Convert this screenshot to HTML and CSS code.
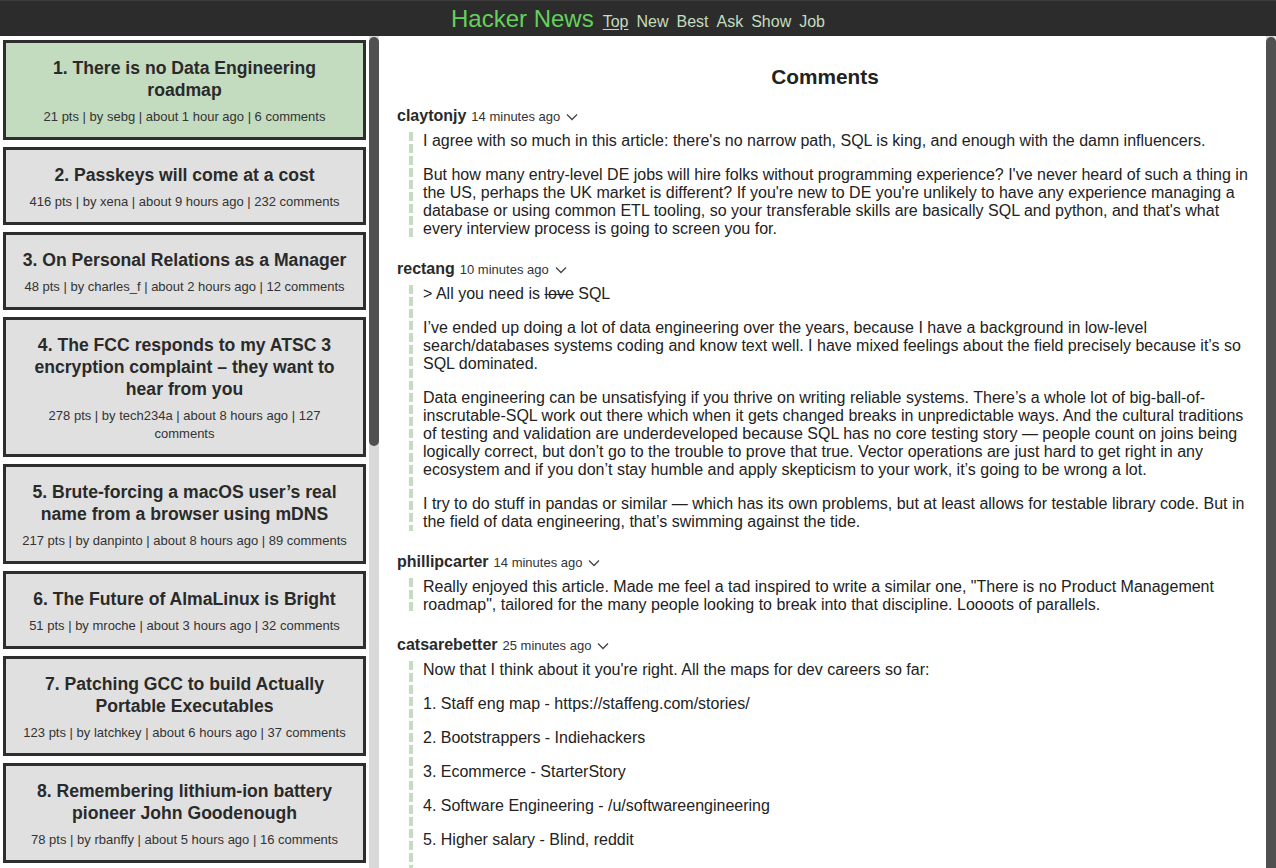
FILE: index.html
```html
<!DOCTYPE html>
<html lang="en">
<head>
<meta charset="utf-8">
<title>Hacker News</title>
<link rel="stylesheet" href="styles.css">
</head>
<body>
<header class="topbar">
  <span class="brand">Hacker News</span>
  <nav class="nav">
    <a class="nav-link active" href="#">Top</a>
    <a class="nav-link" href="#">New</a>
    <a class="nav-link" href="#">Best</a>
    <a class="nav-link" href="#">Ask</a>
    <a class="nav-link" href="#">Show</a>
    <a class="nav-link" href="#">Job</a>
  </nav>
</header>
<div class="layout">
  <div class="pane pane-left">
    <aside class="stories">
      <article class="story selected">
        <h2 class="story-title">1. There is no Data Engineering roadmap</h2>
        <p class="story-meta">21 pts | by sebg | about 1 hour ago | 6 comments</p>
      </article>
      <article class="story">
        <h2 class="story-title">2. Passkeys will come at a cost</h2>
        <p class="story-meta">416 pts | by xena | about 9 hours ago | 232 comments</p>
      </article>
      <article class="story">
        <h2 class="story-title">3. On Personal Relations as a Manager</h2>
        <p class="story-meta">48 pts | by charles_f | about 2 hours ago | 12 comments</p>
      </article>
      <article class="story">
        <h2 class="story-title">4. The FCC responds to my ATSC 3 encryption complaint – they want to hear from you</h2>
        <p class="story-meta">278 pts | by tech234a | about 8 hours ago | 127<br>comments</p>
      </article>
      <article class="story">
        <h2 class="story-title">5. Brute-forcing a macOS user’s real name from a browser using mDNS</h2>
        <p class="story-meta">217 pts | by danpinto | about 8 hours ago | 89 comments</p>
      </article>
      <article class="story">
        <h2 class="story-title">6. The Future of AlmaLinux is Bright</h2>
        <p class="story-meta">51 pts | by mroche | about 3 hours ago | 32 comments</p>
      </article>
      <article class="story">
        <h2 class="story-title">7. Patching GCC to build Actually Portable Executables</h2>
        <p class="story-meta">123 pts | by latchkey | about 6 hours ago | 37 comments</p>
      </article>
      <article class="story">
        <h2 class="story-title">8. Remembering lithium-ion battery pioneer John Goodenough</h2>
        <p class="story-meta">78 pts | by rbanffy | about 5 hours ago | 16 comments</p>
      </article>
    </aside>
    <div class="scrollbar scrollbar-left">
      <div class="scrollbar-thumb thumb-left"></div>
    </div>
  </div>
  <div class="pane pane-right">
    <main class="thread">
      <h1 class="thread-title">Comments</h1>

      <div class="comment">
        <div class="comment-head">
          <span class="comment-author">claytonjy</span>
          <span class="comment-time">14 minutes ago</span>
          <svg class="chevron" width="12" height="8" viewBox="0 0 12 8"><path d="M1 1.5 L6 6.5 L11 1.5" /></svg>
        </div>
        <div class="comment-body">
          <p>I agree with so much in this article: there's no narrow path, SQL is king, and enough with the damn influencers.</p>
          <p>But how many entry-level DE jobs will hire folks without programming experience? I've never heard of such a thing in the US, perhaps the UK market is different? If you're new to DE you're unlikely to have any experience managing a database or using common ETL tooling, so your transferable skills are basically SQL and python, and that's what every interview process is going to screen you for.</p>
        </div>
      </div>

      <div class="comment">
        <div class="comment-head">
          <span class="comment-author">rectang</span>
          <span class="comment-time">10 minutes ago</span>
          <svg class="chevron" width="12" height="8" viewBox="0 0 12 8"><path d="M1 1.5 L6 6.5 L11 1.5" /></svg>
        </div>
        <div class="comment-body">
          <p>&gt; All you need is <s>love</s> SQL</p>
          <p>I’ve ended up doing a lot of data engineering over the years, because I have a background in low-level search/databases systems coding and know text well. I have mixed feelings about the field precisely because it’s so SQL dominated.</p>
          <p>Data engineering can be unsatisfying if you thrive on writing reliable systems. There’s a whole lot of big-ball-of-inscrutable-SQL work out there which when it gets changed breaks in unpredictable ways. And the cultural traditions of testing and validation are underdeveloped because SQL has no core testing story — people count on joins being logically correct, but don’t go to the trouble to prove that true. Vector operations are just hard to get right in any ecosystem and if you don’t stay humble and apply skepticism to your work, it’s going to be wrong a lot.</p>
          <p>I try to do stuff in pandas or similar — which has its own problems, but at least allows for testable library code. But in the field of data engineering, that’s swimming against the tide.</p>
        </div>
      </div>

      <div class="comment">
        <div class="comment-head">
          <span class="comment-author">phillipcarter</span>
          <span class="comment-time">14 minutes ago</span>
          <svg class="chevron" width="12" height="8" viewBox="0 0 12 8"><path d="M1 1.5 L6 6.5 L11 1.5" /></svg>
        </div>
        <div class="comment-body">
          <p>Really enjoyed this article. Made me feel a tad inspired to write a similar one, "There is no Product Management roadmap", tailored for the many people looking to break into that discipline. Loooots of parallels.</p>
        </div>
      </div>

      <div class="comment">
        <div class="comment-head">
          <span class="comment-author">catsarebetter</span>
          <span class="comment-time">25 minutes ago</span>
          <svg class="chevron" width="12" height="8" viewBox="0 0 12 8"><path d="M1 1.5 L6 6.5 L11 1.5" /></svg>
        </div>
        <div class="comment-body comment-body-long">
          <p>Now that I think about it you're right. All the maps for dev careers so far:</p>
          <p>1. Staff eng map - https://staffeng.com/stories/</p>
          <p>2. Bootstrappers - Indiehackers</p>
          <p>3. Ecommerce - StarterStory</p>
          <p>4. Software Engineering - /u/softwareengineering</p>
          <p>5. Higher salary - Blind, reddit</p>
        </div>
      </div>
    </main>
    <div class="scrollbar scrollbar-right">
      <div class="scrollbar-thumb thumb-right"></div>
    </div>
  </div>
</div>
</body>
</html>
```

FILE: styles.css
```css
* {
  box-sizing: border-box;
}

html,
body {
  height: 100%;
}

body {
  margin: 0;
  overflow: hidden;
  font-family: "Liberation Sans", Arial, Helvetica, sans-serif;
  color: #222;
  background: #fff;
  display: flex;
  flex-direction: column;
}

/* Top bar */
.topbar {
  flex: 0 0 36px;
  height: 36px;
  background: #2c2c2c;
  border-top: 1px solid #3d3d3d;
  display: flex;
  justify-content: center;
  align-items: baseline;
  gap: 9px;
  line-height: 35px;
}

.brand {
  font-size: 24px;
  color: #63d15a;
}

.nav {
  display: flex;
  align-items: baseline;
  gap: 8px;
}

.nav-link {
  font-size: 16px;
  color: #c4dcbf;
  text-decoration: none;
}

.nav-link.active {
  text-decoration: underline;
  text-underline-offset: 2px;
}

/* Layout */
.layout {
  flex: 1 1 auto;
  min-height: 0;
  display: flex;
}

.pane {
  display: flex;
  min-height: 0;
  overflow: hidden;
}

.pane-left {
  flex: 0 0 379px;
}

.pane-right {
  flex: 1 1 auto;
  min-width: 0;
}

/* Drawn scrollbars */
.scrollbar {
  flex: 0 0 10px;
  width: 10px;
  padding-top: 1px;
  background: #d9d9d9;
}

.scrollbar-thumb {
  background: #505050;
  border-radius: 5px;
}

.thumb-left {
  height: 409px;
}

.thumb-right {
  height: 900px;
}

/* Story list */
.stories {
  flex: 1 1 auto;
  min-width: 0;
  overflow: hidden;
  padding: 4px 3px 0 3px;
}

.story {
  background: #e0e0e0;
  border: 3px solid #2e2e2e;
  padding: 14px 14px 11px;
  margin-bottom: 7px;
  text-align: center;
}

.story.selected {
  background: #c3dbbf;
}

.story-title {
  margin: 0;
  font-size: 17.6px;
  line-height: 22px;
  font-weight: bold;
  color: #2a2a2a;
}

.story-meta {
  margin: 7px 0 0;
  font-size: 13px;
  line-height: 18px;
  color: #333;
}

/* Comments */
.thread {
  flex: 1 1 auto;
  min-width: 0;
  overflow: hidden;
  padding: 28px 13px 24px 18px;
}

.thread-title {
  margin: 0 0 16px;
  font-size: 20.8px;
  line-height: 26px;
  font-weight: bold;
  text-align: center;
  color: #222;
}

.comment {
  margin-bottom: 21px;
}

.comment-head {
  display: flex;
  align-items: baseline;
  height: 20px;
  line-height: 20px;
  margin-bottom: 6px;
}

.comment-author {
  font-size: 16px;
  font-weight: bold;
  color: #2a2a2a;
}

.comment-time {
  font-size: 13px;
  color: #333;
  margin-left: 5px;
}

.chevron {
  margin-left: 6px;
  align-self: center;
  margin-top: 2px;
}

.chevron path {
  fill: none;
  stroke: #444;
  stroke-width: 1.3;
}

.comment-body {
  margin-left: 12px;
  padding-left: 14px;
  background-image: repeating-linear-gradient(to bottom, #c6dcc2 0 9px, transparent 9px 12px);
  background-size: 4px 100%;
  background-repeat: no-repeat;
  background-position: left top;
}

.comment-body-long {
  padding-bottom: 40px;
}

.comment-body p {
  margin: 0 0 16px;
  font-size: 16px;
  line-height: 18px;
  color: #222;
}

.comment-body p:last-child {
  margin-bottom: 0;
}
```
